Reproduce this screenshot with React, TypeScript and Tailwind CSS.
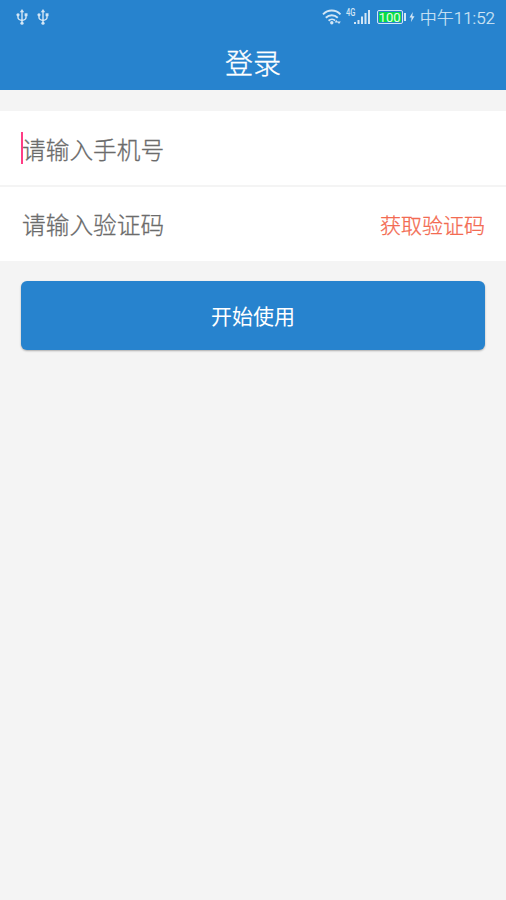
import React, { FC } from 'react'

const UsbIcon: FC = () => (
  <svg
    viewBox="0 0 12 16"
    className="h-4 w-3"
    fill="none"
    stroke="currentColor"
    strokeWidth="1.4"
  >
    <path d="M6 2v12M2 6v2.500c0 1.500 1.500 2.500 4 3 2.500-.5 4-1.500 4-3V6" />
    <path d="M6 0l2.200 3.200H3.800z" fill="currentColor" stroke="none" />
    <circle cx="2" cy="5.800" r="1.600" fill="currentColor" stroke="none" />
    <path d="M8.600 4.300h2.900v2.900H8.600z" fill="currentColor" stroke="none" />
    <circle cx="6" cy="14.200" r="1.600" fill="currentColor" stroke="none" />
  </svg>
)

const WifiIcon: FC = () => (
  <svg
    viewBox="0 0 20 16"
    className="h-4 w-5"
    fill="none"
    stroke="currentColor"
    strokeWidth="1.9"
  >
    <path d="M1 5.300c5-5 12.500-5 17.500 0M3.800 8.700c3.500-3.300 8.500-3.300 12 0M6.600 11.800c2-1.900 4.800-1.900 6.500-.2" />
    <circle cx="9.800" cy="13.800" r="1.700" fill="currentColor" stroke="none" />
    <path
      d="M12.600 13.500l1.800-2.500 1.800 2.500zM15.200 12.500h3.600L17 15z"
      fill="currentColor"
      stroke="none"
    />
  </svg>
)

const SignalIcon: FC = () => (
  <svg viewBox="0 0 17 16" className="h-4 w-[17px]" fill="currentColor">
    <path d="M0 13h2v2H0zM3.500 11h2v4h-2zM7 7.500h2V15H7zM10.500 4h2v11h-2zM14 1h2v14h-2z" />
  </svg>
)

const StatusBar: FC = () => (
  <div className="flex h-[34px] items-center text-[#d3e6f5]">
    <div className="flex gap-[9px] pl-4">
      <UsbIcon />
      <UsbIcon />
    </div>
    <div className="ml-auto flex h-full items-center pr-[11px]">
      <WifiIcon />
      <span className="ml-1 w-2 origin-left -translate-y-1 scale-x-[.75] font-['Roboto',sans-serif] text-[10px] leading-none font-medium">
        4G
      </span>
      <SignalIcon />
      <div className="ml-[6px] flex h-[14px] w-[26px] items-center justify-center rounded-[2px] border border-[#d3e6f5] p-px">
        <span className="flex h-full w-full items-center justify-center bg-[#08dc46] font-['Roboto',sans-serif] text-[13px] leading-none font-normal text-[#e6fbea]">
          100
        </span>
      </div>
      <i className="ml-px h-2 w-[2px] bg-current" />
      <svg viewBox="0 0 6 10" className="ml-[3px] h-[10px] w-[6px]" fill="currentColor">
        <path d="M3.800 0L.5 5.500h2.100L2 10l3.500-5.700H3.300z" />
      </svg>
      <span className="ml-[5px] translate-y-px font-['Roboto','Noto_Sans_CJK_SC',sans-serif] text-[17px] leading-none font-light whitespace-nowrap [-webkit-text-stroke:0.2px]">
        中午11:52
      </span>
    </div>
  </div>
)

const App: FC = () => {
  return (
    <div className="flex min-h-screen flex-col bg-[#f4f4f4] font-['Noto_Sans_CJK_SC',sans-serif]">
      <header className="h-[90px] bg-[#2783ce]">
        <StatusBar />
        <h1 className="flex h-14 items-center justify-center text-[28px] leading-none font-light text-white [-webkit-text-stroke:0.3px]">
          登录
        </h1>
      </header>

      <div className="mt-[21px] h-[150px] divide-y-2 divide-[#f4f4f4] bg-white text-[23.7px] leading-none font-light text-[#6b6b6b] [-webkit-text-stroke:0.3px]">
        <div className="flex h-[76px] items-center px-[21px]">
          <i className="-mr-px h-8 w-[2px] bg-[#ff3d85]" />
          <span className="pt-[3px]">请输入手机号</span>
        </div>
        <div className="flex h-[74px] items-center justify-between px-[21px]">
          <span className="pt-[2px] pl-px">请输入验证码</span>
          <button className="pt-px text-[21px] text-[#f36b52]">获取验证码</button>
        </div>
      </div>

      <button className="mx-[21px] mt-5 h-[69px] rounded-md bg-[#2783ce] text-[21px] leading-none text-white shadow-[0_1px_2px_rgba(0,0,0,0.3)]">
        开始使用
      </button>
    </div>
  )
}

export default App
